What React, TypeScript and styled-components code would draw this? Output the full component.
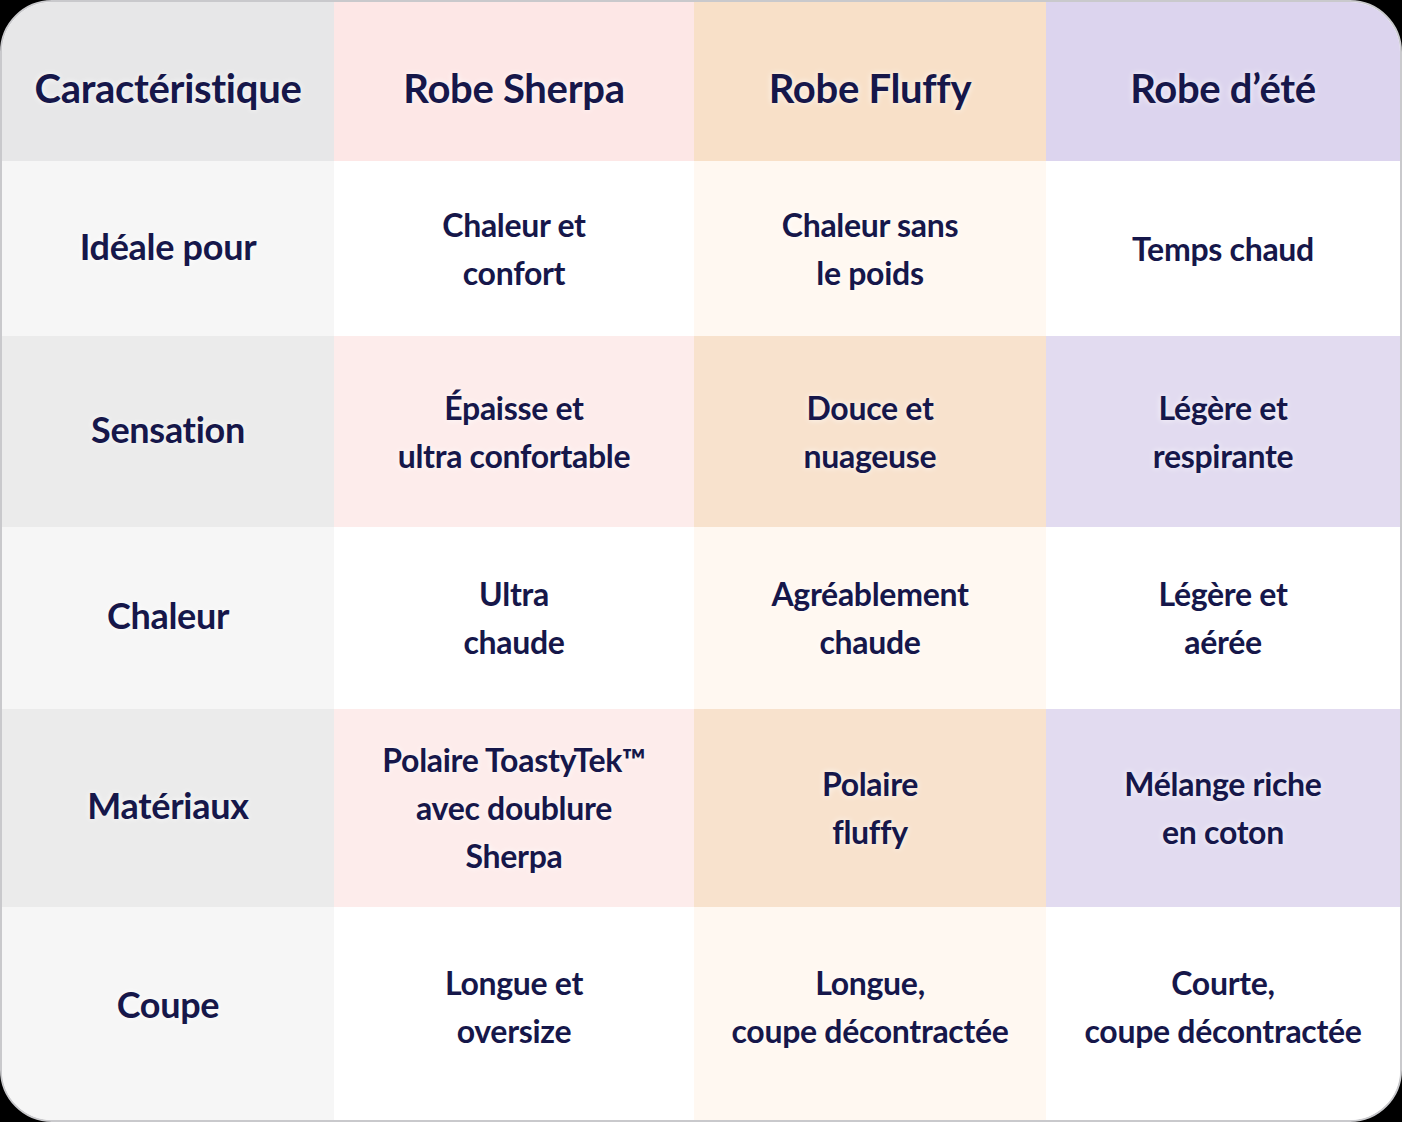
import React from "react";
import styled, { createGlobalStyle } from "styled-components";

const Global = createGlobalStyle`
  html, body { margin: 0; padding: 0; background: #000; }
  body { font-family: "Lato", "Noto Sans", sans-serif; }
`;

const Card = styled.div`
  width: 1402px;
  height: 1122px;
  box-sizing: border-box;
  border: 2px solid #c9c9cc;
  border-radius: 52px;
  overflow: hidden;
  background: #fff;
  display: grid;
  grid-template-columns: 332px 360px 352px 1fr;
  grid-template-rows: 159px 175px 191px 182px 198px 1fr;
`;

type Tone = "head" | "odd" | "even";

const palette: Record<Tone, string[]> = {
  head: ["#e7e7e8", "#fde7e6", "#f8e0c8", "#dcd4ee"],
  odd: ["#f6f6f6", "#ffffff", "#fff8f1", "#ffffff"],
  even: ["#ebebeb", "#fdeceb", "#f8e2cd", "#e2dbf0"],
};

const Cell = styled.div<{ $tone: Tone; $col: number; $last?: boolean }>`
  background: ${(p) => palette[p.$tone][p.$col]};
  display: flex;
  align-items: center;
  justify-content: center;
  text-align: center;
  color: #16174a;
  padding-top: ${(p) => (p.$tone === "head" ? "12px" : "0")};
  padding-bottom: ${(p) => (p.$last ? "14px" : "0")};
  box-sizing: border-box;
  text-shadow: 0 0 6px rgba(255, 255, 255, 0.9);
`;

const HeadText = styled.span`
  font-size: 40px;
  font-weight: 700;
  letter-spacing: -0.3px;
`;

const LabelText = styled.span`
  font-size: 36px;
  font-weight: 700;
  letter-spacing: -0.3px;
  margin-top: -6px;
`;

const BodyText = styled.span`
  font-size: 32px;
  font-weight: 700;
  line-height: 48px;
  letter-spacing: -0.3px;
`;

const headers = ["Caractéristique", "Robe Sherpa", "Robe Fluffy", "Robe d’été"];

const rows: { label: string; cells: string[][] }[] = [
  {
    label: "Idéale pour",
    cells: [["Chaleur et", "confort"], ["Chaleur sans", "le poids"], ["Temps chaud"]],
  },
  {
    label: "Sensation",
    cells: [["Épaisse et", "ultra confortable"], ["Douce et", "nuageuse"], ["Légère et", "respirante"]],
  },
  {
    label: "Chaleur",
    cells: [["Ultra", "chaude"], ["Agréablement", "chaude"], ["Légère et", "aérée"]],
  },
  {
    label: "Matériaux",
    cells: [["Polaire ToastyTek™", "avec doublure", "Sherpa"], ["Polaire", "fluffy"], ["Mélange riche", "en coton"]],
  },
  {
    label: "Coupe",
    cells: [["Longue et", "oversize"], ["Longue,", "coupe décontractée"], ["Courte,", "coupe décontractée"]],
  },
];

export default function App() {
  return (
    <>
      <Global />
      <Card>
        {headers.map((h, i) => (
          <Cell key={h} $tone="head" $col={i}>
            <HeadText>{h}</HeadText>
          </Cell>
        ))}
        {rows.map((r, ri) => {
          const tone: Tone = ri % 2 === 0 ? "odd" : "even";
          const last = ri === rows.length - 1;
          return (
            <React.Fragment key={r.label}>
              <Cell $tone={tone} $col={0} $last={last}>
                <LabelText>{r.label}</LabelText>
              </Cell>
              {r.cells.map((lines, ci) => (
                <Cell key={ci} $tone={tone} $col={ci + 1} $last={last}>
                  <BodyText>
                    {lines.map((l, li) => (
                      <React.Fragment key={li}>
                        {li > 0 && <br />}
                        {l}
                      </React.Fragment>
                    ))}
                  </BodyText>
                </Cell>
              ))}
            </React.Fragment>
          );
        })}
      </Card>
    </>
  );
}
